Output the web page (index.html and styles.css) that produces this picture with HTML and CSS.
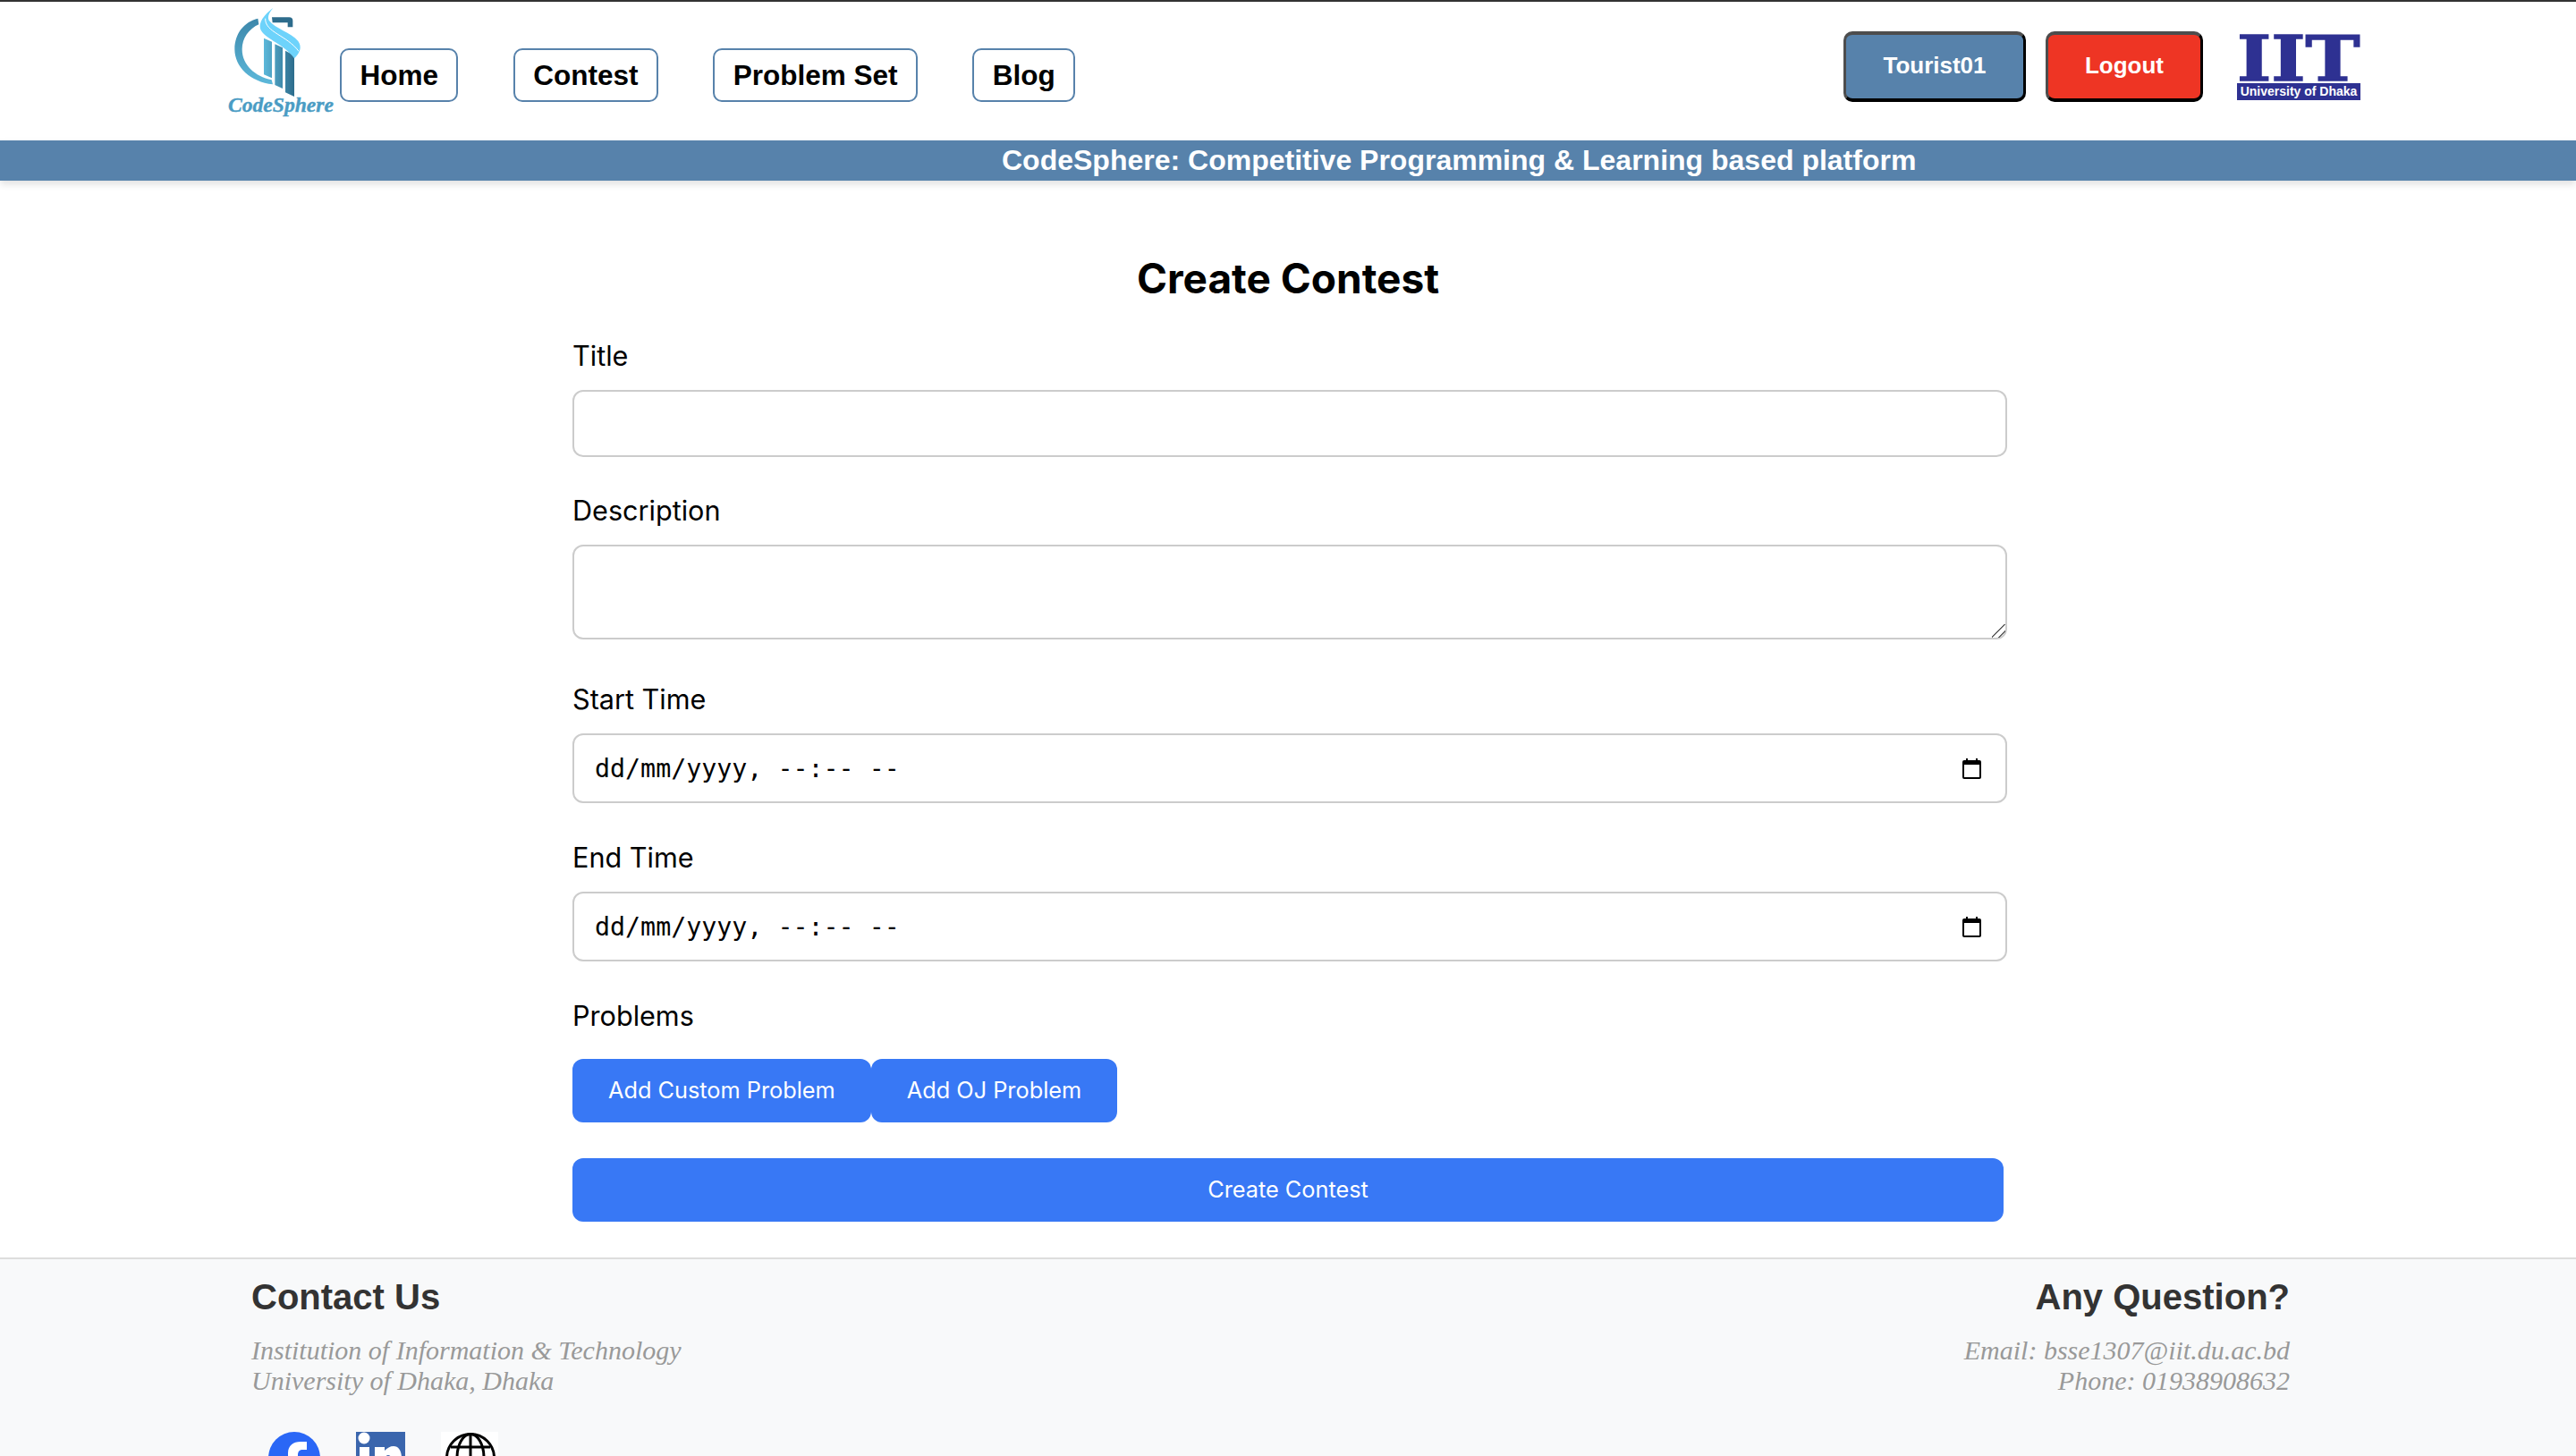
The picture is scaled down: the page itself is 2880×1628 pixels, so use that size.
FILE: index.html
```html
<!DOCTYPE html>
<html>
<head>
    <meta charset="utf-8">
    <title>Create Contest</title>
    <link rel="stylesheet" href="styles.css">
</head>
<body>
    <header class="topnav">
        <div class="logo">
            <svg class="logo-mark" viewBox="75 24 360 300">
                <defs>
                    <linearGradient id="arcfill" x1="0" y1="0" x2="0" y2="1">
                        <stop offset="0" stop-color="#3d87aa"/>
                        <stop offset="1" stop-color="#5cb8da"/>
                    </linearGradient>
                    <linearGradient id="colfill" x1="0" y1="0" x2="1" y2="0">
                        <stop offset="0" stop-color="#5cb8da"/>
                        <stop offset="1" stop-color="#2d6c8c"/>
                    </linearGradient>
                </defs>
                <path d="M175 62 C130 72 97 112 97 165 C97 225 150 275 225 283 L221 268 C165 256 122 218 122 165 C122 128 145 97 178 82 Z" fill="url(#arcfill)"/>
                <path d="M222 58 H280 Q292 58 292 70 V91 H275 V76 H224 Z" fill="#2d6c8c"/>
                <path d="M195 128 L222 140 V262 L195 250 Z M232 148 L258 160 V297 L232 285 Z M267 170 L297 186 V324 L267 310 Z" fill="url(#colfill)"/>
                <path d="M226 27 C192 52 172 82 188 106 C204 132 262 148 297 196 C316 178 324 158 310 138 C286 108 232 96 212 68 C206 56 214 40 226 27 Z" fill="#6dd3fb"/>
                <path d="M200 62 C198 108 272 118 312 172" fill="none" stroke="#ffffff" stroke-width="3"/>
            </svg>
            <div class="logo-word">CodeSphere</div>
        </div>
        <nav class="navlinks">
            <a href="#" class="navlink">Home</a>
            <a href="#" class="navlink">Contest</a>
            <a href="#" class="navlink">Problem Set</a>
            <a href="#" class="navlink">Blog</a>
        </nav>
        <div class="userbox">
            <button class="userbtn tourist">Tourist01</button>
            <button class="userbtn logout">Logout</button>
            <div class="iit">
                <div class="iit-big">IIT</div>
                <div class="iit-strip">University of Dhaka</div>
            </div>
        </div>
    </header>
    <div class="banner">CodeSphere: Competitive Programming &amp; Learning based platform</div>

    <main class="form-wrap">
        <h1 class="form-title">Create Contest</h1>
        <div class="field">
            <label class="field-label">Title</label>
            <input class="field-input" type="text">
        </div>
        <div class="field">
            <label class="field-label">Description</label>
            <textarea class="field-input field-area"></textarea>
        </div>
        <div class="field date-field">
            <label class="field-label">Start Time</label>
            <div class="field-input date-input">
                <span>dd/mm/yyyy, --:-- --</span>
                <svg class="cal" viewBox="0 0 21 23"><path d="M4 0 H6 V2 H15 V0 H17 V2 H19 Q21 2 21 4 V21 Q21 23 19 23 H2 Q0 23 0 21 V4 Q0 2 2 2 H4 Z M2 7 V21 H19 V7 Z"/></svg>
            </div>
        </div>
        <div class="field date-field">
            <label class="field-label">End Time</label>
            <div class="field-input date-input">
                <span>dd/mm/yyyy, --:-- --</span>
                <svg class="cal" viewBox="0 0 21 23"><path d="M4 0 H6 V2 H15 V0 H17 V2 H19 Q21 2 21 4 V21 Q21 23 19 23 H2 Q0 23 0 21 V4 Q0 2 2 2 H4 Z M2 7 V21 H19 V7 Z"/></svg>
            </div>
        </div>
        <div class="field problems">
            <label class="field-label">Problems</label>
            <div class="problem-btns">
                <button class="blue-btn">Add Custom Problem</button>
                <button class="blue-btn">Add OJ Problem</button>
            </div>
        </div>
        <button class="blue-btn submit-btn">Create Contest</button>
    </main>

    <footer class="footer">
        <div class="footer-left">
            <h3 class="footer-head">Contact Us</h3>
            <p class="footer-text">Institution of Information &amp; Technology<br>University of Dhaka, Dhaka</p>
            <div class="socials">
                <svg class="soc-fb" viewBox="0 0 58 58">
                    <circle cx="29" cy="29" r="29" fill="#2a67f6"/>
                    <path d="M22 58 V38 H14 V29 H22 V24 C22 15 28 11 36 11 H43 V20 H38 C35 20 33 22 33 26 V29 H42 L41 38 H33 V58 Z" fill="#ffffff"/>
                </svg>
                <svg class="soc-in" viewBox="0 0 55 55">
                    <rect width="55" height="55" fill="#3b66ad"/>
                    <circle cx="9" cy="7" r="6.500" fill="#ffffff"/>
                    <rect x="4" y="17" width="11" height="33" fill="#ffffff"/>
                    <path d="M21 17 H32 V21 C35 18 38 16 42 16 C48 16 51 22 51 29 V50 H40 V31 C40 28 38 26 36 26 C34 26 32 28 32 31 V50 H21 Z" fill="#ffffff"/>
                </svg>
                <svg class="soc-web" viewBox="0 0 64 64">
                    <rect width="64" height="64" fill="#ffffff"/>
                    <g fill="none" stroke="#000000" stroke-width="3">
                        <circle cx="33" cy="29" r="26.500"/>
                        <ellipse cx="33" cy="29" rx="15" ry="26.500"/>
                        <path d="M33 2.500 V55.500 M6.500 29 H59.500 M11 17 H55 M11 43 H55"/>
                    </g>
                </svg>
            </div>
        </div>
        <div class="footer-right">
            <h3 class="footer-head">Any Question?</h3>
            <p class="footer-text">Email: bsse1307@iit.du.ac.bd<br>Phone: 01938908632</p>
        </div>
    </footer>
</body>
</html>
```

FILE: styles.css
```css
html, body {
    margin: 0;
    height: 100%;
    overflow: hidden;
}
body {
    background: #ffffff;
    font-family: "Liberation Sans", Arial, sans-serif;
}
.topnav {
    display: flex;
    align-items: flex-start;
    height: 155px;
    border-top: 2px solid #333333;
    padding-left: 255px;
    padding-right: 241px;
}
.logo {
    width: 120px;
    margin-top: 6px;
    flex: none;
}
.logo-mark {
    display: block;
    width: 120px;
    height: 100px;
}
.logo-word {
    margin-top: -5px;
    line-height: 28px;
    font-family: "Liberation Serif", serif;
    font-style: italic;
    font-weight: bold;
    font-size: 23.6px;
    white-space: nowrap;
    color: #4a9cc4;
    -webkit-text-stroke: 0.4px #4a9cc4;
}
.navlinks {
    display: flex;
    gap: 61.5px;
    margin-top: 52px;
    margin-left: 5px;
}
.navlink {
    display: block;
    height: 60px;
    line-height: 56px;
    box-sizing: border-box;
    padding: 0 20.4px;
    border: 2px solid #5782ab;
    border-radius: 10px;
    color: #000000;
    font-size: 31.5px;
    font-weight: bold;
    text-decoration: none;
}
.userbox {
    display: flex;
    align-items: flex-start;
    margin-left: auto;
    margin-top: 33px;
}
.userbtn {
    height: 79px;
    box-sizing: border-box;
    padding: 0 0 2px;
    border-style: solid;
    border-width: 4px 3px;
    border-color: #4d4d4d #000000 #000000 #4d4d4d;
    border-radius: 10px;
    color: #ffffff;
    font-family: "Liberation Sans", Arial, sans-serif;
    font-size: 26px;
    font-weight: bold;
}
.tourist {
    width: 204px;
    background: #5782ab;
}
.logout {
    width: 176px;
    margin-left: 22px;
    background: #ee3524;
}
.iit {
    width: 138px;
    margin-left: 38px;
    margin-top: 2px;
}
.iit-big {
    height: 53px;
    line-height: 57px;
    font-family: "DejaVu Serif", serif;
    font-weight: bold;
    font-size: 70px;
    color: #2e3192;
    -webkit-text-stroke: 1.5px #2e3192;
    transform: scaleX(1.17);
    transform-origin: left center;
    white-space: nowrap;
}
.iit-strip {
    height: 19px;
    line-height: 19px;
    margin-top: 3px;
    background: #2e3192;
    color: #ffffff;
    font-size: 14px;
    font-weight: bold;
    text-align: center;
    white-space: nowrap;
}
.banner {
    height: 45px;
    line-height: 44px;
    padding-left: 1120px;
    background: #5782ab;
    color: #ffffff;
    font-size: 32px;
    font-weight: bold;
    box-shadow: 0 4px 8px rgba(0, 0, 0, 0.12);
}
.form-wrap {
    width: 1600px;
    margin: 0 auto;
    font-family: Inter, sans-serif;
}
.form-title {
    margin: 0;
    padding-top: 81px;
    height: 91px;
    line-height: 56px;
    font-size: 46px;
    font-weight: 700;
    text-align: center;
    color: #000000;
}
.field {
    margin-bottom: 36px;
}
.date-field {
    margin-bottom: 37px;
}
.field-label {
    display: block;
    height: 48px;
    line-height: 48px;
    margin-bottom: 14px;
    font-size: 30.6px;
    color: #000000;
}
.field-input {
    display: block;
    width: 1604px;
    height: 75px;
    box-sizing: border-box;
    border: 2px solid #cccccc;
    border-radius: 12px;
    background: #ffffff;
}
.field-area {
    height: 106px;
    margin-bottom: 43px;
}
.field-area::-webkit-resizer {
    background: linear-gradient(135deg, transparent 46%, #666666 46%, #666666 53%, transparent 53%, transparent 72%, #666666 72%, #666666 79%, transparent 79%);
}
.date-input {
    display: flex;
    align-items: center;
    justify-content: space-between;
    height: 78px;
    padding: 0 27px 0 23px;
    font-family: "DejaVu Sans Mono", monospace;
    font-size: 28.3px;
    color: #000000;
}
.cal {
    width: 21px;
    height: 23px;
}
.problems .field-label {
    margin-bottom: 24px;
}
.problems {
    margin-bottom: 40px;
}
.problem-btns {
    display: flex;
}
.blue-btn {
    height: 71px;
    padding: 0 40px 2px;
    border: none;
    border-radius: 12px;
    background: #3878f5;
    color: #ffffff;
    font-family: Inter, sans-serif;
    font-size: 25.3px;
}
.submit-btn {
    display: block;
    width: 1600px;
}
.footer {
    display: flex;
    justify-content: space-between;
    margin-top: 40px;
    height: 300px;
    box-sizing: border-box;
    border-top: 2px solid #dddddd;
    padding: 19px 320px 0 281px;
    background: #f8f9fa;
}
.footer-head {
    margin: 0;
    line-height: 46px;
    font-size: 40px;
    font-weight: bold;
    color: #333333;
}
.footer-right {
    text-align: right;
}
.footer-text {
    margin: 20px 0 0;
    line-height: 34px;
    font-family: "Liberation Serif", serif;
    font-style: italic;
    font-size: 30px;
    color: #999999;
}
.socials {
    display: flex;
    align-items: flex-start;
    margin: 40px 0 0 19px;
}
.soc-fb {
    width: 58px;
    height: 58px;
}
.soc-in {
    width: 55px;
    height: 55px;
    margin-left: 40px;
}
.soc-web {
    width: 64px;
    height: 64px;
    margin-left: 40px;
}
```
